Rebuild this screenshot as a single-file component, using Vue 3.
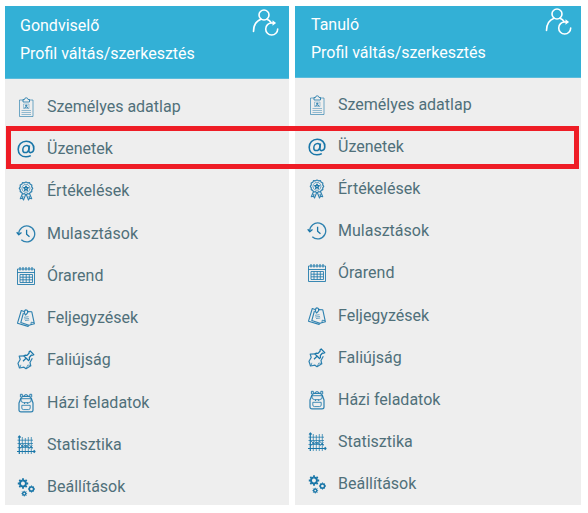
<script setup>
const items = [
  { icon: 'badge', label: 'Személyes adatlap' },
  { icon: 'at', label: 'Üzenetek' },
  { icon: 'award', label: 'Értékelések' },
  { icon: 'history', label: 'Mulasztások' },
  { icon: 'calendar', label: 'Órarend' },
  { icon: 'notes', label: 'Feljegyzések' },
  { icon: 'pinned', label: 'Faliújság' },
  { icon: 'backpack', label: 'Házi feladatok' },
  { icon: 'chart', label: 'Statisztika' },
  { icon: 'gears', label: 'Beállítások' }
]

const panels = [
  { id: 'guardian', role: 'Gondviselő' },
  { id: 'student', role: 'Tanuló' }
]

// Stroked paths on a 20 x 20 grid: d = outline, w = stroke width, o = opacity
const icons = {
  badge: [
    { d: 'M7.5 3H3.5V19.5H17V3H13', w: 1, o: 0.6 },
    { d: 'M7 5V2.5H8.5Q8.5 0.8 10.2 0.8T12 2.5H13.5V5Z', w: 1, o: 0.8 },
    { d: 'M7.5 7H13V11.5H7.5Z', w: 0.7, o: 0.5 },
    { d: 'M10.2 7.6V9.6M9 8.8H11.5M8.3 11Q10.2 8.8 12.2 11', w: 1, o: 0.85 },
    { d: 'M5.5 13.5H15M5.5 15.5H15M5.5 17.5H15', w: 0.8, o: 0.55 }
  ],
  at: [
    { d: 'M13.4 6.5L12.8 11.4C12.5 14.6 17.4 14.4 17.8 10C18.2 5.4 14.7 2.2 10.2 2.2C5.6 2.2 2.2 5.7 2.2 10.2C2.2 14.9 5.5 17.8 10 17.8C11.9 17.8 13.5 17.3 14.8 16.6', w: 1.6, o: 1 },
    { d: 'M13 9.3C13.2 7.4 12.2 6.5 10.7 6.5C8.4 6.5 6.8 8.5 6.8 10.9C6.8 12.6 7.8 13.6 9.2 13.6C11.4 13.6 12.7 11.7 13 9.3Z', w: 1.5, o: 1 }
  ],
  award: [
    { d: 'M10 1L11.6 1.8L13.4 1.6L14.2 3.2L15.8 4L15.7 5.8L16.7 7.3L15.7 8.8L15.8 10.6L14.2 11.4L13.3 13L11.6 12.7L10 13.7L8.4 12.7L6.6 13L5.8 11.4L4.2 10.6L4.3 8.8L3.3 7.3L4.3 5.8L4.2 4L5.8 3.2L6.6 1.6L8.4 1.8Z', w: 1.2, o: 0.9 },
    { d: 'M10 3.3A4 4 0 1 1 9.9 3.3', w: 0.8, o: 0.8 },
    { d: 'M10 5L10.7 6.6L12.3 6.7L11 7.8L11.4 9.4L10 8.5L8.6 9.4L9 7.8L7.7 6.7L9.3 6.6Z', w: 1.2, o: 1 },
    { d: 'M6.3 13L4.3 17.7L6.5 17.3L7.5 19L9.5 14M13.7 13L15.7 17.7L13.5 17.3L12.5 19L10.5 14M7 15L6.5 17M13 15L13.5 17', w: 1.1, o: 0.9 }
  ],
  history: [
    { d: 'M2.7 10A8 8 0 1 1 5.3 15.8', w: 1.3, o: 0.9 },
    { d: 'M0.7 8.3L2.8 10.7L5.5 8.6', w: 1.3, o: 1 },
    { d: 'M10.6 5.7V10.3L13.5 12.8', w: 1.3, o: 1 }
  ],
  calendar: [
    { d: 'M1.5 3H18.5V18.5H1.5ZM1.5 6.5H18.5', w: 1, o: 0.85 },
    { d: 'M4 1V4.5M7 1V4.5M10 1V4.5M13 1V4.5M16 1V4.5', w: 1.2, o: 0.85 },
    { d: 'M4 8.5H16.5V16.5H4ZM4 11.2H16.5M4 13.8H16.5M7 8.5V16.5M10.2 8.5V16.5M13.3 8.5V16.5', w: 0.9, o: 0.9 }
  ],
  notes: [
    { d: 'M8 3.4L5.3 2.5L1.5 15.2L12 18.4L13 17.3M11 3.6L15.8 3.8L18.4 15.8L13 17.3L4.8 14.6L7.4 5', w: 1.1, o: 0.9 },
    { d: 'M8.4 3.8Q9 1.2 11 2.3T10.4 6.2Q8.5 7.4 8.4 3.8M11 5.7L9 7.3', w: 1.2, o: 0.9 },
    { d: 'M8 9.3L12.5 8.7M8.2 11L13 10.5M9 12.6L13.2 12', w: 0.8, o: 0.75 },
    { d: 'M15 16.7L15.2 14.2L18 14.7', w: 1, o: 0.8 }
  ],
  pinned: [
    { d: 'M8.5 5.8L3.2 6.2L4.2 9.5L2 13.2L3.5 18L8 17.2L10 18.7L14.8 15.8L14 12.5L16.3 8.2', w: 1.2, o: 0.9 },
    { d: 'M14.2 1L17.8 4.7L16.5 5.3L15.5 5L13.3 7.5L13.5 9.6L12.5 10.5L8 6L9 5.2L11 5.4L13.2 3L13 2ZM10 8.3L7 11.2', w: 1.2, o: 1 },
    { d: 'M4.3 17.5L4.8 14.8M14.5 15.5L11.8 15L10.3 18.2', w: 0.9, o: 0.7 }
  ],
  backpack: [
    { d: 'M5 5Q5.3 3.5 7.3 3.3H12.7Q14.8 3.5 15.2 5L17 10V17Q17 18.9 15 18.9H5Q3 18.9 3 17V10Z', w: 1.2, o: 0.9 },
    { d: 'M4.4 4V1.3H6.3V3.4M13.8 3.4V1.3H15.7V4M8 3.2Q8 1.6 10 1.6T12 3.2', w: 1, o: 0.9 },
    { d: 'M4.8 5.7H15.3Q15.8 9.7 12.5 9.7H7.7Q4.4 9.7 4.8 5.7M8.5 9.7V11M11.7 9.7V11', w: 1, o: 0.85 },
    { d: 'M5.8 12.3H14.2V15Q14.2 16.6 12.5 16.6H7.5Q5.8 16.6 5.8 15Z', w: 1, o: 0.8 }
  ],
  chart: [
    { d: 'M3.3 19V1M1 16.5H19M2.1 2.5L3.3 1L4.6 2.5M17.7 15.2L19 16.5L17.7 17.8', w: 1.2, o: 1 },
    { d: 'M6.3 2V19M9.3 3V19M12.3 2V19M15.3 2V19', w: 0.9, o: 0.8 },
    { d: 'M1.5 5.2H17M1.5 8.5H17M1.5 12.5H17', w: 0.9, o: 0.8 },
    { d: 'M3.5 14L7.3 9.7L10 12L12.5 9L16.5 13.5M4 9L7 12L10 10L13.5 13.3L16.5 10.5', w: 1, o: 0.8 }
  ],
  gears: [
    { d: 'M7 3.5A3 3 0 1 1 6.9 3.5', w: 2, o: 1 },
    { d: 'M7 1.3V3M7 10V11.7M1.8 6.5H3.5M10.5 6.5H12.2M3.3 2.8L4.5 4M9.5 9L10.7 10.2M3.3 10.2L4.5 9M9.5 4L10.7 2.8', w: 1.8, o: 1 },
    { d: 'M15.5 9.8A2.2 2.2 0 1 1 15.4 9.8', w: 1.7, o: 1 },
    { d: 'M15.5 8.6V9.6M15.5 14.4V15.4M12.1 12H13M18 12H19M13.2 9.7L14 10.4M17 13.6L17.8 14.3M13.2 14.3L14 13.6M17 10.4L17.8 9.7', w: 1.1, o: 1 },
    { d: 'M8.3 15A1.6 1.6 0 1 1 8.2 15', w: 1.4, o: 1 },
    { d: 'M8.3 13.8V14.6M8.3 18.6V19.4M5.5 16.6H6.3M10.3 16.6H11.1M6.3 14.6L7 15.3M9.6 17.9L10.3 18.6M6.3 18.6L7 17.9M9.6 15.3L10.3 14.6', w: 1, o: 1 }
  ]
}
</script>

<template>
  <main class="page">
    <section v-for="panel in panels" :key="panel.id" class="panel" :class="panel.id">
      <header class="profile">
        <div class="who">
          <span>{{ panel.role }}</span>
          <span>Profil váltás/szerkesztés</span>
        </div>
        <button class="switch" type="button" aria-label="Profil váltás">
          <svg viewBox="0 0 28 28" aria-hidden="true">
            <circle cx="12" cy="7" r="5" />
            <path d="M1.5 23.5C1.5 16.5 5 12.8 9 11.3M15 11.3C17 12.2 18.2 13.2 19 14.5" />
            <path d="M22.5 15H19.8A6 6 0 1 0 25.7 21" />
            <path class="tip" d="M20.5 12.2L24 15L20.5 17.8Z" />
          </svg>
        </button>
      </header>
      <nav class="menu">
        <a v-for="item in items" :key="item.icon" class="item" href="#">
          <svg class="icon" viewBox="0 0 20 20" aria-hidden="true">
            <path
              v-for="(part, i) in icons[item.icon]"
              :key="i"
              :d="part.d"
              :stroke-width="part.w"
              :opacity="part.o"
            />
          </svg>
          <span>{{ item.label }}</span>
        </a>
      </nav>
    </section>
    <div class="highlight"></div>
  </main>
</template>

<style>
body {
  background: #fff;
}
</style>

<style scoped>
.page {
  position: relative;
  box-sizing: border-box;
  display: grid;
  grid-template-columns: 284fr 286fr;
  gap: 6px;
  min-height: 100vh;
  padding: 6px 7px 8px 5px;
  font-family: Roboto, "Liberation Sans", sans-serif;
  font-size: 16px;
  line-height: 24px;
}

.panel {
  display: flex;
  flex-direction: column;
  background: #eee;
}

.profile {
  display: flex;
  justify-content: space-between;
  align-items: flex-start;
  padding: 5px 9px 11px 15px;
  border-bottom: 1px solid #5bbcdc;
  background: #33b0d6;
  color: #fff;
}

.who {
  display: flex;
  flex-direction: column;
  gap: 2px;
  padding-top: 2px;
  line-height: 26px;
}

.switch {
  width: 28px;
  height: 28px;
  margin-top: -3px;
  padding: 0;
  border: 0;
  background: none;
  cursor: pointer;
}

.switch svg {
  display: block;
  fill: none;
  stroke: #fff;
  stroke-width: 1.6;
  stroke-linecap: round;
}

.switch .tip {
  fill: #fff;
  stroke: none;
}

.menu {
  flex: 1;
  display: flex;
  flex-direction: column;
  justify-content: space-between;
  padding: 16px 11px 6px;
}

.item {
  display: flex;
  align-items: center;
  gap: 11px;
  color: #50707a;
  text-decoration: none;
}

.icon {
  flex: none;
  width: 20px;
  height: 20px;
  fill: none;
  stroke: #1976a8;
  stroke-linejoin: round;
}

.student .profile {
  padding: 4px 8px 11px 16px;
}

.student .menu {
  padding: 15px 12px 9px;
}

.highlight {
  position: absolute;
  top: 126px;
  left: 6px;
  right: 9px;
  box-sizing: border-box;
  height: 43px;
  border: 5px solid #ee1c25;
  pointer-events: none;
}
</style>
